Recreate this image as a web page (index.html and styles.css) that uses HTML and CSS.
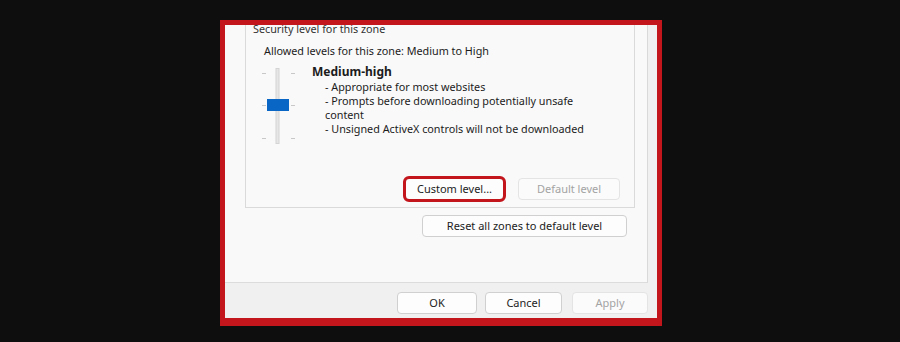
FILE: index.html
```html
<!DOCTYPE html>
<html lang="en">
<head>
<meta charset="utf-8">
<title>Internet Options - Security</title>
<link rel="stylesheet" href="styles.css">
</head>
<body>
<div class="stage">
  <div class="frame">
    <div class="panel">
      <div class="group">
        <div class="legend">Security level for this zone</div>
        <div class="allowed">Allowed levels for this zone: Medium to High</div>
        <div class="level">
          <svg class="slider" width="34" height="76" viewBox="0 0 34 76" aria-hidden="true">
            <rect x="14" y="0.5" width="3" height="75" fill="#e6e6e6" stroke="#d4d4d4" stroke-width="1"/>
            <line x1="0" y1="5.5" x2="4" y2="5.5" stroke="#c8c8c8"/>
            <line x1="29" y1="5.5" x2="33" y2="5.5" stroke="#c8c8c8"/>
            <line x1="0" y1="37.5" x2="4" y2="37.5" stroke="#c8c8c8"/>
            <line x1="29" y1="37.5" x2="33" y2="37.5" stroke="#c8c8c8"/>
            <line x1="0" y1="70.5" x2="4" y2="70.5" stroke="#c8c8c8"/>
            <line x1="29" y1="70.5" x2="33" y2="70.5" stroke="#c8c8c8"/>
            <rect x="5" y="31" width="22" height="12" fill="#0a66c4"/>
          </svg>
          <div class="desc">
            <div class="title">Medium-high</div>
            <div class="line">- Appropriate for most websites</div>
            <div class="line">- Prompts before downloading potentially unsafe<br>content</div>
            <div class="line">- Unsigned ActiveX controls will not be downloaded</div>
          </div>
        </div>
        <div class="group-actions">
          <button class="btn custom">Custom level...</button>
          <button class="btn disabled">Default level</button>
        </div>
      </div>
      <div class="reset-row">
        <button class="btn reset">Reset all zones to default level</button>
      </div>
    </div>
    <div class="footer">
      <button class="btn ok">OK</button>
      <button class="btn cancel">Cancel</button>
      <button class="btn disabled apply">Apply</button>
    </div>
  </div>
</div>
</body>
</html>
```

FILE: styles.css
```css
html, body {
  margin: 0;
  padding: 0;
}
body {
  width: 900px;
  height: 342px;
  overflow: hidden;
  background: #0e0e0e;
  font-family: "Noto Sans", "Open Sans", sans-serif;
  font-size: 10.8px;
  color: #1c1c1c;
}
.stage {
  padding: 20px 0 0 220px;
}
.frame {
  width: 442px;
  box-sizing: border-box;
  border: 5px solid #c3161c;
  border-bottom-width: 8px;
  background: #f0f0f0;
  overflow: hidden;
  display: flex;
  flex-direction: column;
}
.panel {
  height: 258px;
  box-sizing: border-box;
  background: #f9f9f9;
  border-right: 1px solid #d9d9d9;
  border-bottom: 1px solid #dcdcdc;
  margin-right: 9px;
  padding: 0 12px 0 20px;
  display: flex;
  flex-direction: column;
}
.group {
  margin-top: -3px;
  height: 186px;
  box-sizing: border-box;
  border: 1px solid #dadada;
  display: flex;
  flex-direction: column;
}
.legend {
  margin: -1px 0 0 7px;
  line-height: 14px;
  color: #333;
}
.allowed {
  margin: 8px 0 0 18px;
  line-height: 14px;
}
.level {
  display: flex;
  align-items: flex-start;
  margin: 6px 0 0 16px;
  gap: 16px;
}
.slider {
  display: block;
  margin-top: 4px;
}
.desc {
  white-space: nowrap;
}
.title {
  font-size: 12px;
  font-weight: 700;
  line-height: 16px;
}
.line {
  line-height: 14px;
  padding-left: 13px;
}
.group-actions {
  display: flex;
  justify-content: flex-end;
  gap: 14px;
  margin-top: 34px;
  padding-right: 14px;
}
.btn {
  font-family: inherit;
  font-size: 11px;
  color: #1c1c1c;
  height: 22px;
  box-sizing: border-box;
  background: #fdfdfd;
  border: 1px solid #d0d0d0;
  border-radius: 4px;
  padding: 0;
  line-height: 20px;
}
.custom {
  width: 99px;
  outline: 3px solid #c3161c;
  outline-offset: -1px;
}
.btn.disabled {
  color: #a3a3a3;
  border-color: #e4e4e4;
  background: #fbfbfb;
}
.group-actions .disabled {
  width: 102px;
}
.reset-row {
  display: flex;
  justify-content: flex-end;
  margin-top: 7px;
  padding-right: 8px;
}
.reset {
  width: 205px;
}
.footer {
  height: 35px;
  box-sizing: border-box;
  padding: 9px 9px 0 0;
  display: flex;
  justify-content: flex-end;
  align-items: flex-start;
}
.ok {
  width: 80px;
}
.cancel {
  width: 77px;
  margin-left: 8px;
}
.apply {
  width: 76px;
  margin-left: 10px;
}
```
